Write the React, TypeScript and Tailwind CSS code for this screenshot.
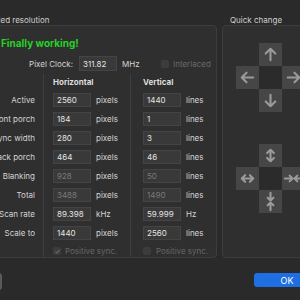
const rows = [
  { label: "Active", h: "2560", v: "1440" },
  { label: "Front porch", h: "184", v: "1" },
  { label: "Sync width", h: "280", v: "3" },
  { label: "Back porch", h: "464", v: "46" },
  { label: "Blanking", h: "928", v: "50", dim: true },
  { label: "Total", h: "3488", v: "1490", dim: true },
  { label: "Scan rate", h: "89.398", v: "59.999", hu: "kHz", vu: "Hz" },
  { label: "Scale to", h: "1440", v: "2560" },
];

function Field({ value, dim, w = "w-[38px]", h = "h-[14px]" }: { value: string; dim?: boolean; w?: string; h?: string }) {
  return (
    <div
      className={`${w} ${h} flex shrink-0 items-center border border-[#444444] bg-[#393939] pl-[3px] ${
        dim ? "text-[#7a7a7a]" : "text-[#e4e4e4]"
      }`}
    >
      {value}
    </div>
  );
}

function Check({ checked }: { checked?: boolean }) {
  return (
    <div className="flex h-[8px] w-[8px] shrink-0 items-center justify-center rounded-[2px] bg-[#3c3c3c]">
      {checked && (
        <svg viewBox="0 0 10 10" className="h-[7px] w-[7px]">
          <path d="M2 5.2l2 2.2L8 2.5" fill="none" stroke="#7a7a7a" strokeWidth="1.4" />
        </svg>
      )}
    </div>
  );
}

const icons: Record<string, string> = {
  up: "M12 18V6M7 11l5-5 5 5",
  down: "M12 6v12M7 13l5 5 5-5",
  left: "M18 12H6M11 7l-5 5 5 5",
  right: "M6 12h12M13 7l5 5-5 5",
  grow_v: "M12 6v12M8.5 9.5L12 6l3.5 3.5M8.5 14.5L12 18l3.5-3.5",
  grow_h: "M6 12h12M9.5 8.5L6 12l3.5 3.5M14.5 8.5L18 12l-3.5 3.5",
  shrink_h: "M3 12h8M8 9l3 3-3 3M21 12h-8M16 9l-3 3 3 3",
  shrink_v: "M12 3v8M9 8l3 3 3-3M12 21v-8M9 16l3-3 3 3",
};

function Pad({ name }: { name: string }) {
  return (
    <div className="flex items-center justify-center bg-[#464646]">
      <svg viewBox="0 0 24 24" className="h-[23px] w-[23px]">
        <path d={icons[name]} fill="none" stroke="#9a9a9a" strokeWidth="2.2" strokeLinecap="round" strokeLinejoin="round" />
      </svg>
    </div>
  );
}

function Cross({ names }: { names: [string, string, string, string] }) {
  const [u, l, r, d] = names;
  return (
    <div className="grid grid-cols-[23px_23px_23px] grid-rows-[23px_23px_23px]">
      <div />
      <Pad name={u} />
      <div />
      <Pad name={l} />
      <div className="bg-[#2b2b2b]" />
      <Pad name={r} />
      <div />
      <Pad name={d} />
      <div />
    </div>
  );
}

export default function App() {
  return (
    <div className="relative h-[300px] w-[300px] overflow-hidden bg-[#2a2a2a] text-[8px] leading-none text-[#d4d4d4] [font-family:Inter,'Liberation_Sans',sans-serif]">
      <div className="-ml-[30px] pt-[15px]">
        <div className="flex gap-[5px]">
          <section className="w-[247px] shrink-0">
            <div className="h-[10px] pl-[9px] leading-[10px] text-[#cfcfcf]">Detailed resolution</div>
            <div className="flex h-[233px] flex-col rounded-[4px] border border-[#3d3d3d] bg-[#2f2f2f]">
              <div className="mt-[11px] h-[12px] pl-[30px] text-[10px] leading-[12px] font-bold text-[#27d027]">
                Finally working!
              </div>
              <div className="mt-[7px] flex h-[15px] items-center">
                <div className="flex w-[102px] justify-end whitespace-nowrap">Pixel Clock:</div>
                <div className="ml-[6px]">
                  <Field value="311.82" h="h-[15px]" />
                </div>
                <div className="ml-[5px] w-[39px]">MHz</div>
                <Check />
                <div className="ml-[4px] text-[#6a6a6a]">Interlaced</div>
              </div>
              <div className="mt-[3px] flex">
                <div className="w-[72px] shrink-0 pr-[8px]">
                  <div className="h-[16px]" />
                  {rows.map((r) => (
                    <div key={r.label} className="flex h-[19px] items-center justify-end whitespace-nowrap">
                      {r.label}
                    </div>
                  ))}
                  <div className="mt-[3px] h-[12px]" />
                </div>
                <div className="w-[87px] shrink-0 border-l border-[#3f3f3f] pl-[9px]">
                  <div className="flex h-[16px] items-center font-bold text-[#dedede]">Horizontal</div>
                  {rows.map((r) => (
                    <div key={r.label} className="flex h-[19px] items-center">
                      <Field value={r.h} dim={r.dim} />
                      <span className="ml-[5px]">{r.hu ?? "pixels"}</span>
                    </div>
                  ))}
                  <div className="mt-[3px] flex h-[12px] items-center">
                    <Check checked />
                    <span className="ml-[4px] text-[#666666]">Positive sync.</span>
                  </div>
                </div>
                <div className="flex-1 border-l border-[#3f3f3f] pl-[12px]">
                  <div className="flex h-[16px] items-center font-bold text-[#dedede]">Vertical</div>
                  {rows.map((r) => (
                    <div key={r.label} className="flex h-[19px] items-center">
                      <Field value={r.v} dim={r.dim} />
                      <span className="ml-[5px]">{r.vu ?? "lines"}</span>
                    </div>
                  ))}
                  <div className="mt-[3px] flex h-[12px] items-center">
                    <Check />
                    <span className="ml-[5px] text-[#666666]">Positive sync.</span>
                  </div>
                </div>
              </div>
            </div>
          </section>
          <section className="w-[100px] shrink-0">
            <div className="h-[10px] pl-[8px] leading-[10px] text-[#cfcfcf]">Quick change</div>
            <div className="flex h-[233px] flex-col gap-[32px] rounded-[4px] border border-[#3d3d3d] bg-[#2f2f2f] pt-[17px] pl-[13px]">
              <Cross names={["up", "left", "right", "down"]} />
              <Cross names={["grow_v", "grow_h", "shrink_h", "shrink_v"]} />
            </div>
          </section>
        </div>
        <div className="mt-[15px] flex items-start">
          <div className="ml-[2px] h-[17px] w-[30px] shrink-0 rounded-[3px] bg-[#5a5a5a]" />
          <div className="ml-[252px] flex h-[14px] w-[66px] shrink-0 items-center justify-center rounded-[3px] bg-[#1f6fe3] text-[9px] text-white">
            OK
          </div>
        </div>
      </div>
    </div>
  );
}
